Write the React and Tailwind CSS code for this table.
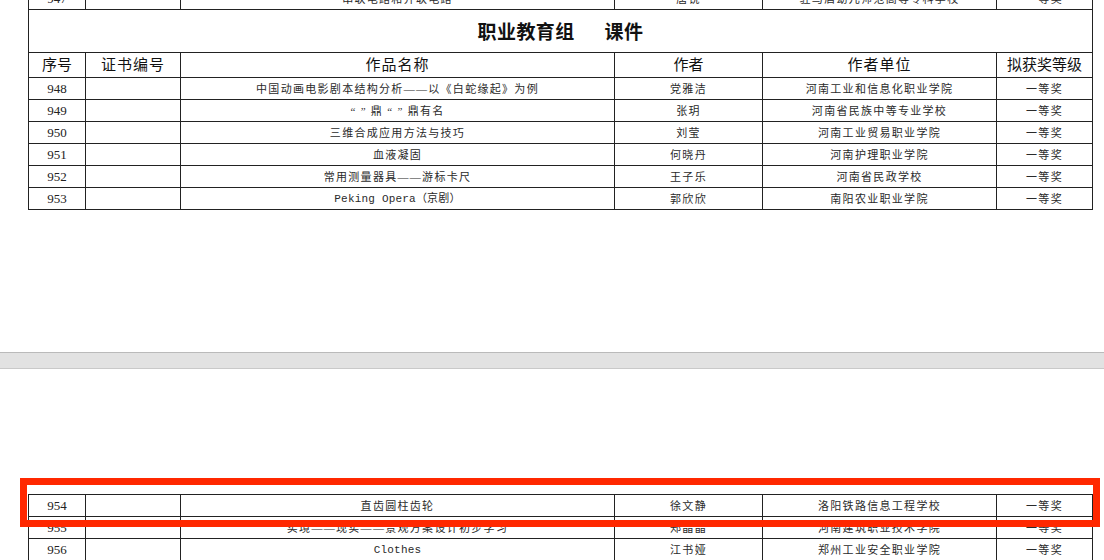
import React from 'react';

const cols = [57, 95, 434, 148, 234, 96];

const topRows = [
  ['947', '串联电路和并联电路', '唐锐', '驻马店幼儿师范高等专科学校', '一等奖'],
  ['948', '中国动画电影剧本结构分析——以《白蛇缘起》为例', '党雅洁', '河南工业和信息化职业学院', '一等奖'],
  ['949', '“ ” 鼎 “ ” 鼎有名', '张玥', '河南省民族中等专业学校', '一等奖'],
  ['950', '三维合成应用方法与技巧', '刘莹', '河南工业贸易职业学院', '一等奖'],
  ['951', '血液凝固', '何晓丹', '河南护理职业学院', '一等奖'],
  ['952', '常用测量器具——游标卡尺', '王子乐', '河南省民政学校', '一等奖'],
  ['953', 'Peking Opera（京剧）', '郭欣欣', '南阳农业职业学院', '一等奖'],
];

const bottomRows = [
  ['954', '直齿圆柱齿轮', '徐文静', '洛阳铁路信息工程学校', '一等奖'],
  ['955', '实境——现实——景观方案设计初步学习', '郑晶晶', '河南建筑职业技术学院', '一等奖'],
  ['956', 'Clothes', '江书娅', '郑州工业安全职业学院', '一等奖'],
];

const song = { fontFamily: '"Liberation Serif", "Noto Sans CJK SC", serif' };
const mono = { fontFamily: '"Liberation Mono", "Noto Sans CJK SC", monospace' };

function Cols() {
  return (
    <colgroup>
      {cols.map((w, i) => (
        <col key={i} style={{ width: w }} />
      ))}
    </colgroup>
  );
}

function DataRow({ row }) {
  const [no, title, author, unit, level] = row;
  const latin = /^[A-Za-z]/.test(title);
  return (
    <tr className="h-[22px]">
      <td className="border border-[#222] text-center text-[13px] text-[#222] p-0 leading-none">{no}</td>
      <td className="border border-[#222] p-0"></td>
      <td
        className={`border border-[#222] text-center text-[#2a2a2a] p-0 leading-none pt-[2px] ${latin ? 'text-[11px] tracking-[0.2px]' : 'text-[11px] tracking-[1.3px]'}`}
        style={latin ? mono : song}
      >
        {title}
      </td>
      <td className="border border-[#222] text-center text-[11px] tracking-[1.3px] text-[#2a2a2a] p-0 pt-[2px] leading-none">{author}</td>
      <td className="border border-[#222] text-center text-[11px] tracking-[1.3px] text-[#2a2a2a] p-0 pt-[2px] leading-none">{unit}</td>
      <td className="border border-[#222] text-center text-[11px] tracking-[1.3px] text-[#2a2a2a] p-0 pt-[2px] leading-none">{level}</td>
    </tr>
  );
}

export default function App() {
  return (
    <div className="relative w-[1104px] h-[560px] bg-white overflow-hidden flex flex-col" style={song}>
      {/* page 1 */}
      <div className="h-[352px] overflow-hidden pl-[28px]">
        <table className="w-[1064px] table-fixed border-collapse border border-black -mt-[13px]">
          <Cols />
          <tbody>
            <DataRow row={topRows[0]} />
            <tr className="h-[43px]">
              <td colSpan={6} className="border border-[#222] text-center p-0">
                <span className="text-[19px] font-bold text-[#111] tracking-[0.4px]" style={{ fontFamily: '"Noto Sans CJK SC", sans-serif' }}>
                  职业教育组<span className="inline-block w-[30px]"></span>课件
                </span>
              </td>
            </tr>
            <tr className="h-[25px] text-[15px] text-[#111]">
              <td className="border border-[#222] text-center p-0 leading-none">序号</td>
              <td className="border border-[#222] text-center p-0 leading-none tracking-[1px]">证书编号</td>
              <td className="border border-[#222] text-center p-0 leading-none tracking-[1px]">作品名称</td>
              <td className="border border-[#222] text-center p-0 leading-none">作者</td>
              <td className="border border-[#222] text-center p-0 leading-none tracking-[1px]">作者单位</td>
              <td className="border border-[#222] text-center p-0 leading-none">拟获奖等级</td>
            </tr>
            {topRows.slice(1).map((r) => (
              <DataRow key={r[0]} row={r} />
            ))}
          </tbody>
        </table>
      </div>

      {/* page gap */}
      <div className="h-[17px] bg-[#e2e2e2] border-t border-[#bababa] border-b border-b-[#c9c9c9]"></div>

      {/* page 2 */}
      <div className="flex-1 overflow-hidden pl-[28px] pt-[125px]">
        <table className="w-[1064px] table-fixed border-collapse border border-black">
          <Cols />
          <tbody>
            {bottomRows.map((r) => (
              <DataRow key={r[0]} row={r} />
            ))}
          </tbody>
        </table>
      </div>

      {/* highlight */}
      <div className="absolute left-[20px] top-[478px] w-[1080px] h-[49px] border-[7px] border-[#ff2800]"></div>
    </div>
  );
}
